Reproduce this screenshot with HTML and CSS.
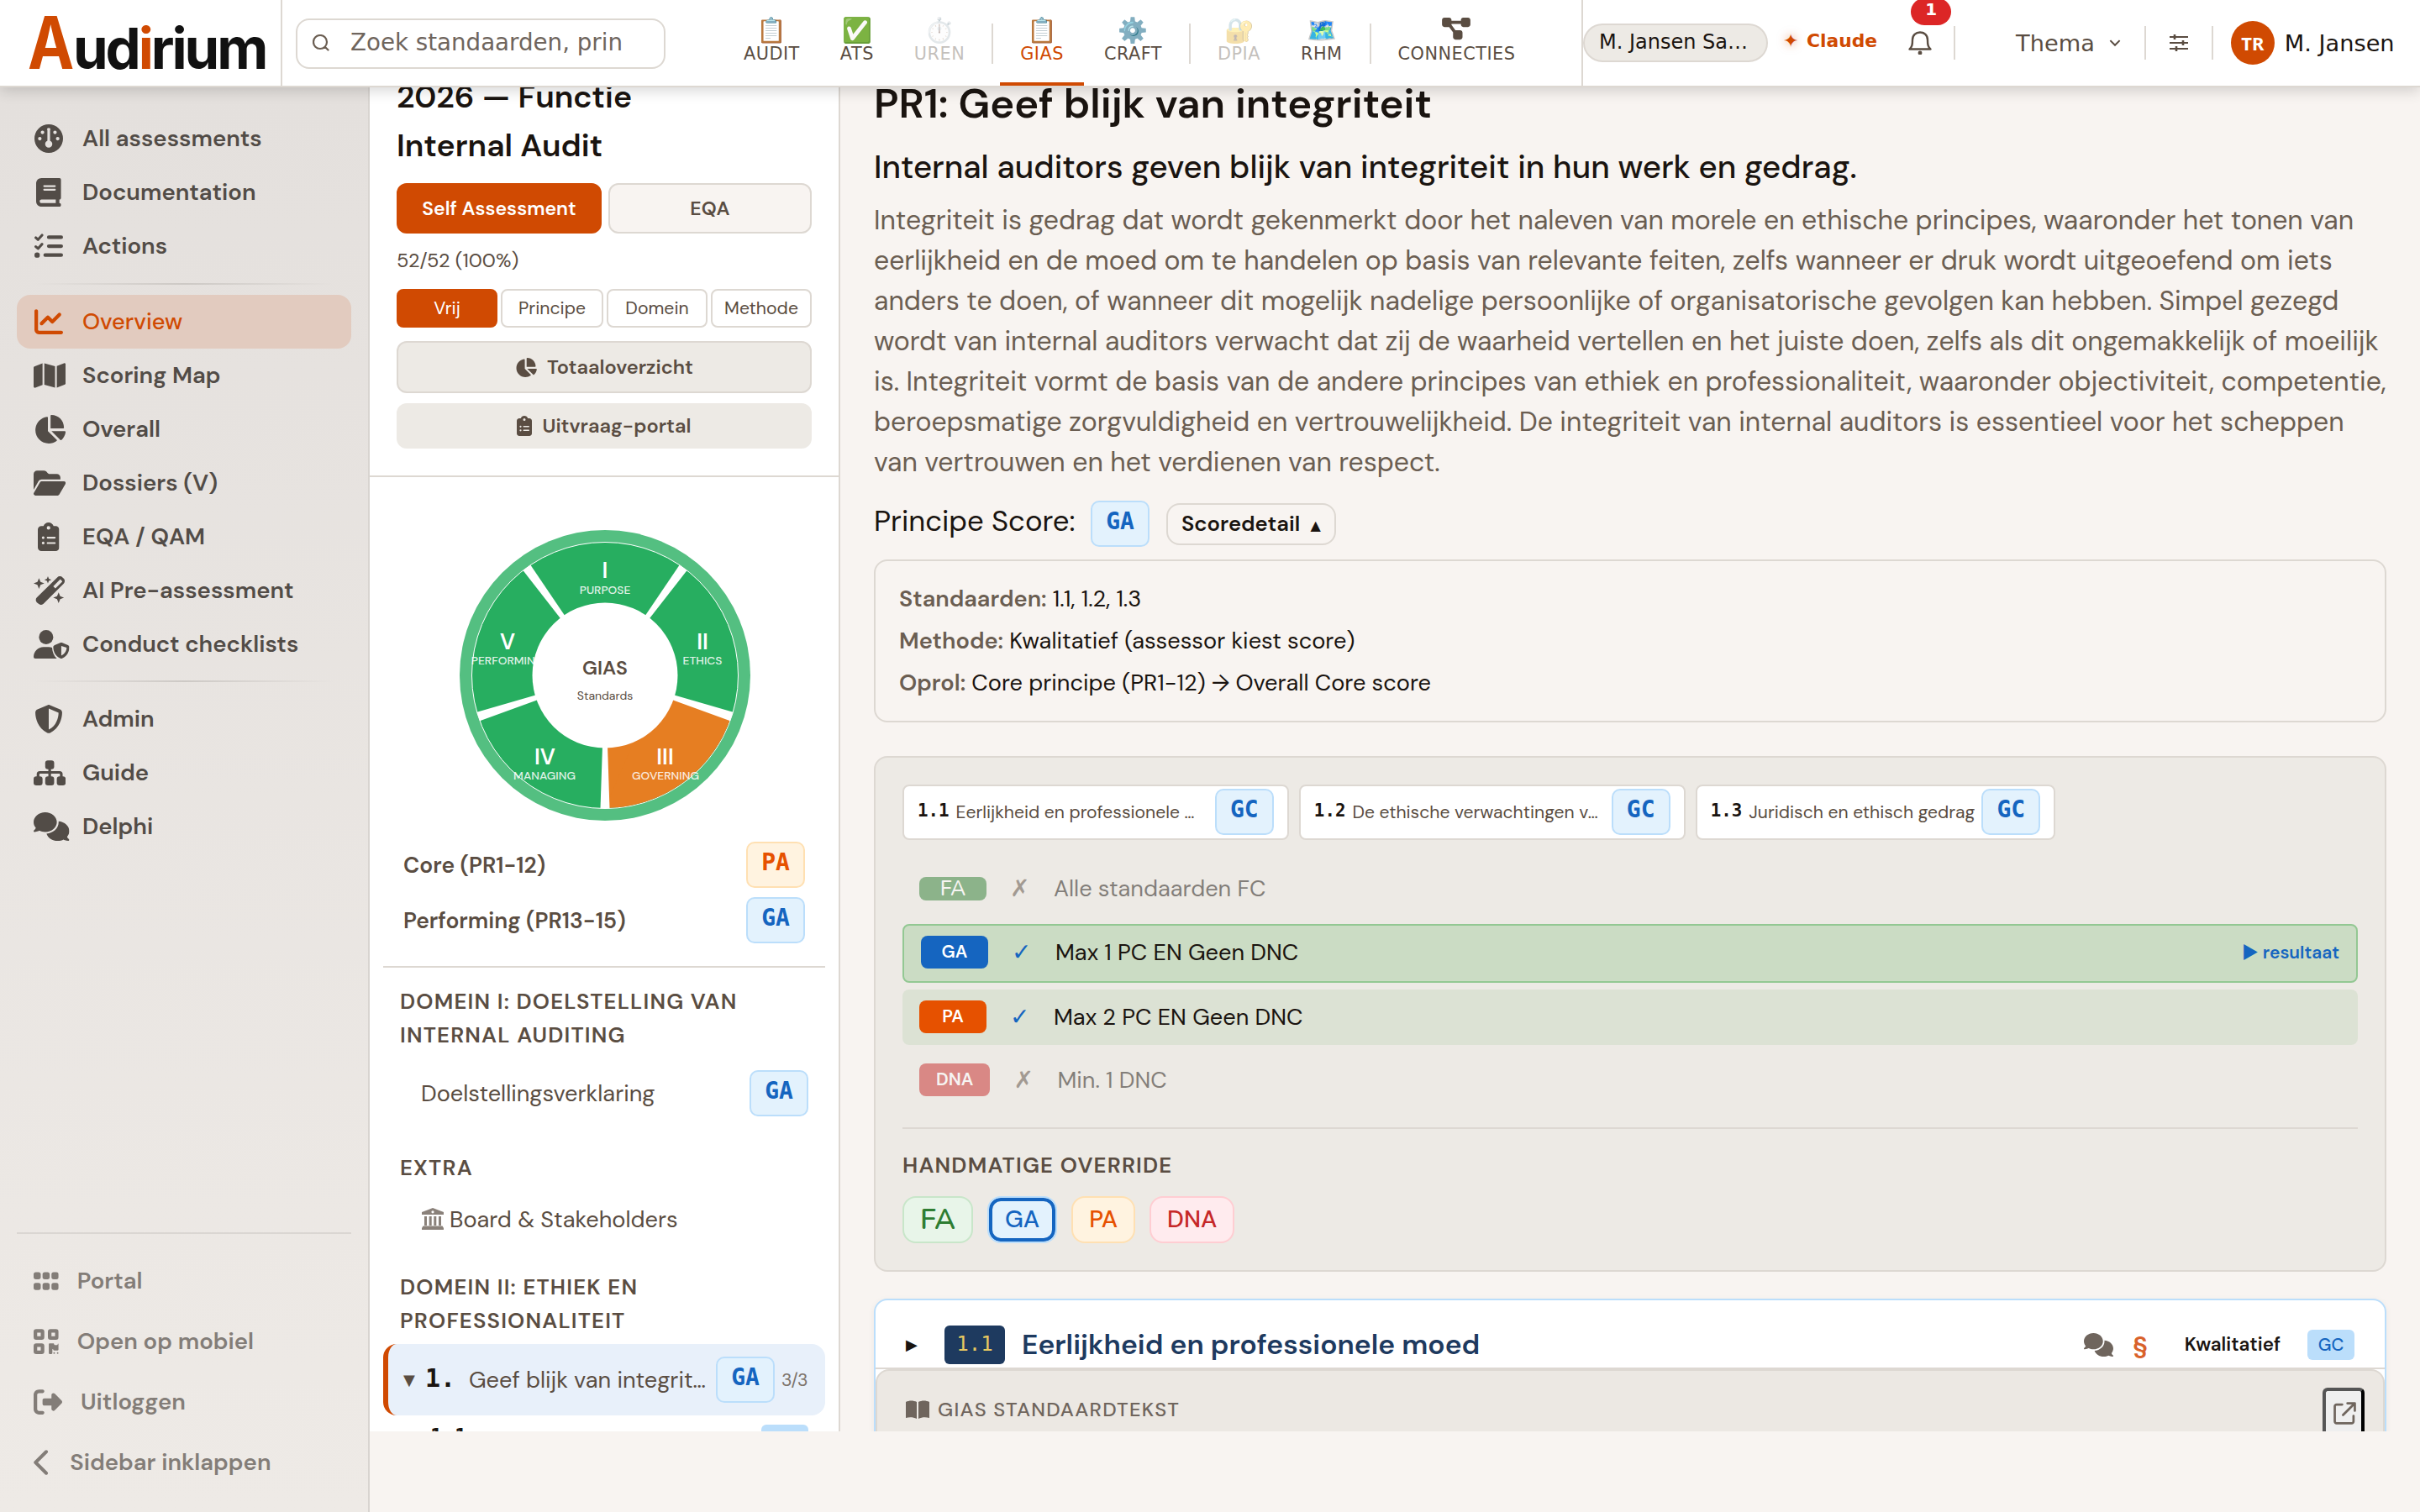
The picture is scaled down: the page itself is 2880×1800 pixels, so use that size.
FILE: index.html
```
<!DOCTYPE html>
<html lang="nl">
<head>
    <meta charset="UTF-8">
    <meta name="viewport" content="width=device-width, initial-scale=1.0">
    <title>GIAS - Audirium</title>
    <link rel="stylesheet" href="styles.css">
</head>
<body>
    <!-- shared icons -->
    <svg class="sprite">
        <symbol id="i-gauge" viewBox="0 0 512 512"><path fill-rule="evenodd" d="M0 256a256 256 0 1 1 512 0A256 256 0 1 1 0 256zM288 96c0-17.700-14.300-32-32-32s-32 14.300-32 32c0 0 8 0 8 0V295.200c-23.100 9.500-40 32.300-40 58.800c0 35.300 28.700 64 64 64s64-28.700 64-64c0-26.500-16.500-49.300-40-58.800V96zM144 176a32 32 0 1 0 0-64 32 32 0 1 0 0 64zM96 288a32 32 0 1 0 0-64 32 32 0 1 0 0 64zM400 144a32 32 0 1 0 -64 0 32 32 0 1 0 64 0zM416 288a32 32 0 1 0 0-64 32 32 0 1 0 0 64z"/></symbol>
        <symbol id="i-book" viewBox="0 0 448 512"><path d="M96 0C43 0 0 43 0 96V416c0 53 43 96 96 96H384h32c17.7 0 32-14.3 32-32s-14.3-32-32-32V384c17.7 0 32-14.3 32-32V32c0-17.7-14.3-32-32-32H384 96zm0 384H352v64H96c-17.7 0-32-14.3-32-32s14.3-32 32-32zm32-240c0-8.8 7.2-16 16-16H336c8.8 0 16 7.2 16 16s-7.2 16-16 16H144c-8.8 0-16-7.2-16-16zm16 48H336c8.8 0 16 7.2 16 16s-7.2 16-16 16H144c-8.8 0-16-7.2-16-16s7.2-16 16-16z"/></symbol>
        <symbol id="i-list" viewBox="0 0 512 512"><g fill="none" stroke="currentColor" stroke-linecap="round" stroke-linejoin="round"><path stroke-width="46" d="M24 104l40 36 72-80M24 264l40 36 72-80"/><path stroke-width="64" d="M256 96H480M256 256H480M192 416H480"/></g><circle cx="48" cy="416" r="48"/></symbol>
        <symbol id="i-line" viewBox="0 0 512 512"><path d="M64 64c0-17.7-14.3-32-32-32S0 46.3 0 64V400c0 44.2 35.8 80 80 80H480c17.7 0 32-14.3 32-32s-14.3-32-32-32H80c-8.8 0-16-7.2-16-16V64zm406.6 86.600c12.5-12.5 12.5-32.8 0-45.3s-32.8-12.5-45.3 0L320 210.7l-57.4-57.4c-12.5-12.5-32.8-12.5-45.3 0l-112 112c-12.5 12.5-12.5 32.8 0 45.3s32.8 12.5 45.3 0L240 221.3l57.4 57.4c12.5 12.5 32.8 12.5 45.3 0l128-128z"/></symbol>
        <symbol id="i-map" viewBox="0 0 576 512"><path d="M384 476.1L192 421.2V35.9L384 90.8V476.1zm32-1.2V88.4L543.1 37.5c15.8-6.3 32.9 5.3 32.9 22.3V394.6c0 9.8-6 18.6-15.1 22.3L416 474.8zM15.1 95.1L160 37.2V423.6L32.9 474.5C17.1 480.8 0 469.2 0 452.2V117.4c0-9.8 6-18.6 15.1-22.3z"/></symbol>
        <symbol id="i-pie" viewBox="0 0 576 512"><path d="M304 240V16.6c0-9 7-16.6 16-16.6C443.7 0 544 100.3 544 224c0 9-7.6 16-16.6 16H304zM32 272C32 150.7 122.1 50.3 239 34.3c9.2-1.3 17 6.1 17 15.4V288L412.5 444.5c6.7 6.7 6.2 17.7-1.5 23.1C371.8 495.6 323.8 512 272 512C139.5 512 32 404.6 32 272zm526.4 16c9.3 0 16.6 7.8 15.4 17c-7.7 55.9-34.6 105.6-73.9 142.3c-6 5.6-15.4 5.2-21.2-.7L320 288H558.4z"/></symbol>
        <symbol id="i-folder" viewBox="0 0 576 512"><path d="M88.7 223.8L0 375.8V96C0 60.7 28.7 32 64 32H181.5c17 0 33.3 6.7 45.3 18.7l26.5 26.5c12 12 28.3 18.7 45.3 18.7H416c35.3 0 64 28.7 64 64v32H144c-22.8 0-43.8 12.1-55.3 31.800zm27.600 16.1C122.1 230 132.6 224 144 224H544c11.5 0 22 6.1 27.7 16.1s5.7 22.2-.1 32.1l-112 192C453.9 474 443.4 480 432 480H32c-11.5 0-22-6.1-27.7-16.1s-5.7-22.2 .1-32.1l112-192z"/></symbol>
        <symbol id="i-clip" viewBox="0 0 384 512"><path d="M192 0c-41.8 0-77.4 26.7-90.5 64H64C28.7 64 0 92.7 0 128V448c0 35.3 28.7 64 64 64H320c35.3 0 64-28.7 64-64V128c0-35.3-28.7-64-64-64H282.5C269.4 26.7 233.8 0 192 0zm0 64a32 32 0 1 1 0 64 32 32 0 1 1 0-64zM72 272a24 24 0 1 1 48 0 24 24 0 1 1 -48 0zm104-16H304c8.8 0 16 7.2 16 16s-7.2 16-16 16H176c-8.8 0-16-7.2-16-16s7.2-16 16-16zM72 368a24 24 0 1 1 48 0 24 24 0 1 1 -48 0zm88 0c0-8.8 7.2-16 16-16H304c8.8 0 16 7.2 16 16s-7.2 16-16 16H176c-8.8 0-16-7.2-16-16z"/></symbol>
        <symbol id="i-wand" viewBox="0 0 576 512"><path d="M96 32l28 68 68 28-68 28-28 68-28-68L0 128l68-28zM256 0l18 46 46 18-46 18-18 46-18-46-46-18 46-18zM448 288l28 68 68 28-68 28-28 68-28-68-68-28 68-28z"/><path fill-rule="evenodd" d="M427 18a62 62 0 0 1 88 0l25 25a62 62 0 0 1 0 88L177 494a62 62 0 0 1-88 0l-31-25a62 62 0 0 1 0-88zM471 62L352 181l38 38 119-119c5-5 5-9 0-14l-24-24c-5-5-9-5-14 0z"/></symbol>
        <symbol id="i-usershield" viewBox="0 0 640 512"><circle cx="224" cy="128" r="128"/><path d="M178 304h92c22 0 43 4 62 11 2 78 34 150 84 197H30c-17 0-30-13-30-30 0-98 80-178 178-178z"/><path fill-rule="evenodd" d="M496 224c4 0 8 1 11 2l108 44c15 6 25 20 25 36 0 60-25 160-127 203-11 4-23 4-34 0-102-43-127-143-127-203 0-16 10-30 25-36l108-44c3-1 7-2 11-2zM496 286v172c72-34 94-98 96-142z"/></symbol>
        <symbol id="i-shield" viewBox="0 0 512 512"><path d="M256 0c4.6 0 9.2 1 13.4 2.9L457.7 82.8c22 9.3 38.4 31 38.3 57.2c-.5 99.2-41.3 280.7-213.6 363.2c-16.7 8-36.1 8-52.8 0C57.3 420.7 16.5 239.2 16 140c-.1-26.2 16.3-47.9 38.3-57.2L242.7 2.9C246.8 1 251.4 0 256 0zm0 66.8V444.8C394 378 431.1 230.1 432 141.4L256 66.8l0 0z"/></symbol>
        <symbol id="i-sitemap" viewBox="0 0 576 512"><rect x="208" y="32" width="160" height="160" rx="48"/><rect x="0" y="320" width="160" height="160" rx="48"/><rect x="208" y="320" width="160" height="160" rx="48"/><rect x="416" y="320" width="160" height="160" rx="48"/><path fill="none" stroke="currentColor" stroke-width="48" d="M288 180v150M80 330v-50c0-18 14-32 32-32h352c18 0 32 14 32 32v50"/></symbol>
        <symbol id="i-comments" viewBox="0 0 640 512"><path d="M208 352c114.9 0 208-78.8 208-176S322.9 0 208 0S0 78.8 0 176c0 38.6 14.7 74.3 39.6 103.4c-3.5 9.4-8.7 17.7-14.2 24.7c-4.8 6.2-9.7 11-13.3 14.3c-1.8 1.6-3.3 2.9-4.3 3.7c-.5 .4-.9 .7-1.1 .8l-.2 .2C1 327.2-1.4 334.4 .8 340.9S9.1 352 16 352c21.8 0 43.8-5.6 62.1-12.5c9.2-3.5 17.8-7.4 25.2-11.4C134.1 343.3 169.8 352 208 352zM448 176c0 112.3-99.1 196.9-216.5 207C255.8 457.4 336.4 512 432 512c38.2 0 73.9-8.7 104.7-23.9c7.5 4 16 7.9 25.2 11.4c18.3 6.9 40.3 12.5 62.1 12.5c6.9 0 13.1-4.5 15.2-11.1c2.1-6.6-.2-13.8-5.8-17.9l-.2-.2c-.2-.2-.6-.4-1.1-.8c-1-.8-2.5-2-4.3-3.7c-3.6-3.3-8.5-8.1-13.3-14.3c-5.5-7-10.7-15.4-14.2-24.7c24.9-29 39.6-64.7 39.6-103.4c0-92.8-84.9-168.9-192.6-175.5c.4 5.1 .6 10.3 .6 15.500z"/></symbol>
        <symbol id="i-grip" viewBox="0 0 448 512"><path d="M40 96h48a40 40 0 0 1 40 40v48a40 40 0 0 1-40 40H40a40 40 0 0 1-40-40v-48a40 40 0 0 1 40-40zM200 96h48a40 40 0 0 1 40 40v48a40 40 0 0 1-40 40h-48a40 40 0 0 1-40-40v-48a40 40 0 0 1 40-40zM360 96h48a40 40 0 0 1 40 40v48a40 40 0 0 1-40 40h-48a40 40 0 0 1-40-40v-48a40 40 0 0 1 40-40zM40 288h48a40 40 0 0 1 40 40v48a40 40 0 0 1-40 40H40a40 40 0 0 1-40-40v-48a40 40 0 0 1 40-40zM200 288h48a40 40 0 0 1 40 40v48a40 40 0 0 1-40 40h-48a40 40 0 0 1-40-40v-48a40 40 0 0 1 40-40zM360 288h48a40 40 0 0 1 40 40v48a40 40 0 0 1-40 40h-48a40 40 0 0 1-40-40v-48a40 40 0 0 1 40-40z"/></symbol>
        <symbol id="i-qr" viewBox="0 0 448 512"><g fill="none" stroke="currentColor" stroke-width="64"><rect x="32" y="64" width="128" height="128" rx="16"/><rect x="288" y="64" width="128" height="128" rx="16"/><rect x="32" y="320" width="128" height="128" rx="16"/></g><path d="M272 288h80c9 0 16 7 16 16s7 16 16 16h32c9 0 16-7 16-16s16-16 16 0v96c0 9-7 16-16 16h-64c-9 0-16-7-16-16s-16-16-16 0v64c0 9-7 16-16 16h-32c-9 0-16-7-16-16V304c0-9 7-16 16-16z"/><circle cx="368" cy="464" r="15"/><circle cx="432" cy="464" r="15"/></symbol>
        <symbol id="i-logout" viewBox="0 0 512 512"><path d="M377.9 105.9L500.7 228.7c7.2 7.2 11.3 17.1 11.3 27.3s-4.1 20.1-11.3 27.3L377.9 406.1c-6.4 6.4-15 9.9-24 9.9c-18.7 0-33.9-15.2-33.9-33.9l0-62.1-128 0c-17.7 0-32-14.3-32-32l0-64c0-17.7 14.3-32 32-32l128 0 0-62.1c0-18.7 15.2-33.9 33.9-33.9c9 0 17.6 3.6 24 9.9zM160 96L96 96c-17.7 0-32 14.3-32 32l0 256c0 17.7 14.3 32 32 32l64 0c17.7 0 32 14.3 32 32s-14.3 32-32 32l-64 0c-53 0-96-43-96-96L0 128C0 75 43 32 96 32l64 0c17.7 0 32 14.3 32 32s-14.3 32-32 32z"/></symbol>
        <symbol id="i-left" viewBox="0 0 320 512"><path fill="none" stroke="currentColor" stroke-width="60" stroke-linecap="round" stroke-linejoin="round" d="M226 64L34 256l192 192"/></symbol>
        <symbol id="i-nodes" viewBox="0 0 576 512"><path d="M0 80C0 53.5 21.5 32 48 32h96c26.5 0 48 21.5 48 48V96H384V80c0-26.5 21.5-48 48-48h96c26.5 0 48 21.5 48 48v96c0 26.5-21.5 48-48 48H432c-26.5 0-48-21.5-48-48V160H192v16c0 1.7-.1 3.4-.3 5L272 288h96c26.5 0 48 21.5 48 48v96c0 26.5-21.5 48-48 48H272c-26.5 0-48-21.5-48-48V336c0-1.7 .1-3.4 .3-5L144 224H48c-26.500 0-48-21.5-48-48V80z"/></symbol>
    </svg>

    <header class="topbar">
        <div class="logo"><span class="logo-a">A</span>ud<span class="logo-i">i</span>rium</div>
        <div class="search-wrap">
            <div class="search">
                <svg class="search-icon" viewBox="0 0 20 20"><path fill="none" stroke="currentColor" stroke-width="2.2" stroke-linecap="round" d="M14.700 14.700L18.500 18.500M17 9A8 8 0 1 1 1 9a8 8 0 0 1 16 0z"/></svg>
                <span class="search-text">Zoek standaarden, princ</span>
            </div>
        </div>
        <nav class="modules">
            <a class="module"><span class="emoji">📋</span>AUDIT</a>
            <a class="module"><span class="emoji">✅</span>ATS</a>
            <a class="module disabled"><span class="emoji">⏱️</span>UREN</a>
            <i class="vsep"></i>
            <a class="module active"><span class="emoji">📋</span>GIAS</a>
            <a class="module"><span class="emoji">⚙️</span>CRAFT</a>
            <i class="vsep"></i>
            <a class="module disabled"><span class="emoji">🔐</span>DPIA</a>
            <a class="module"><span class="emoji">🗺️</span>RHM</a>
            <i class="vsep"></i>
            <a class="module"><span class="emoji"><svg class="nodes"><use href="#i-nodes"/></svg></span>CONNECTIES</a>
        </nav>
        <div class="tools">
            <span class="pill">M. Jansen Sa…</span>
            <span class="claude"><span class="spark">✦</span>Claude</span>
            <span class="bell">
                <svg viewBox="0 0 30 28"><path fill="none" stroke="currentColor" stroke-width="2.400" stroke-linejoin="round" d="M2.500 21.500c3-3 3.500-5 3.500-11C6 5 10 1.500 15 1.500S24 5 24 10.500c0 6 .5 8 3.500 11z"/><circle cx="15" cy="26" r="2.400" fill="currentColor"/></svg>
                <b class="count">1</b>
            </span>
            <i class="tsep"></i>
            <span class="thema">Thema <svg viewBox="0 0 12 8"><path fill="none" stroke="currentColor" stroke-width="1.800" d="M1 1l5 5 5-5"/></svg></span>
            <i class="tsep"></i>
            <svg class="sliders" viewBox="0 0 22 20"><path stroke="currentColor" stroke-width="2.200" d="M0 3h22M0 10h22M0 17h22"/><path stroke="currentColor" stroke-width="2.600" d="M6 0v6M16 7v6M8 14v6"/></svg>
            <i class="tsep"></i>
            <span class="avatar">TR</span>
            <span class="user">M. Jansen</span>
        </div>
    </header>

    <div class="page">
        <aside class="sidebar">
            <a class="nav-item"><span class="ico"><svg class="w512"><use href="#i-gauge"/></svg></span>All assessments</a>
            <a class="nav-item"><span class="ico"><svg class="w448"><use href="#i-book"/></svg></span>Documentation</a>
            <a class="nav-item"><span class="ico"><svg class="w512"><use href="#i-list"/></svg></span>Actions</a>
            <hr class="fade">
            <a class="nav-item active"><span class="ico"><svg class="w512"><use href="#i-line"/></svg></span>Overview</a>
            <a class="nav-item"><span class="ico"><svg class="w576"><use href="#i-map"/></svg></span>Scoring Map</a>
            <a class="nav-item"><span class="ico"><svg class="w576"><use href="#i-pie"/></svg></span>Overall</a>
            <a class="nav-item"><span class="ico"><svg class="w576"><use href="#i-folder"/></svg></span>Dossiers (V)</a>
            <a class="nav-item"><span class="ico"><svg class="w384"><use href="#i-clip"/></svg></span>EQA / QAM</a>
            <a class="nav-item"><span class="ico"><svg class="w576"><use href="#i-wand"/></svg></span>AI Pre-assessment</a>
            <a class="nav-item"><span class="ico"><svg class="w640"><use href="#i-usershield"/></svg></span>Conduct checklists</a>
            <hr class="fade">
            <a class="nav-item"><span class="ico"><svg class="w512"><use href="#i-shield"/></svg></span>Admin</a>
            <a class="nav-item"><span class="ico"><svg class="w576"><use href="#i-sitemap"/></svg></span>Guide</a>
            <a class="nav-item"><span class="ico"><svg class="w640"><use href="#i-comments"/></svg></span>Delphi</a>
            <div class="side-foot">
                <a class="foot-item"><svg class="w448"><use href="#i-grip"/></svg>Portal</a>
                <a class="foot-item"><svg class="w448"><use href="#i-qr"/></svg>Open op mobiel</a>
                <a class="foot-item"><svg class="w512"><use href="#i-logout"/></svg>Uitloggen</a>
                <a class="foot-item"><svg class="w320"><use href="#i-left"/></svg>Sidebar inklappen</a>
            </div>
        </aside>

        <section class="tree">
            <div class="tree-head">
                <h2 class="tree-title">2026 — Functie<br>Internal Audit</h2>
                <div class="tabs"><a class="tab on">Self Assessment</a><a class="tab">EQA</a></div>
                <p class="progress">52/52 (100%)</p>
                <div class="filters"><a class="filter on">Vrij</a><a class="filter">Principe</a><a class="filter">Domein</a><a class="filter">Methode</a></div>
                <a class="wide outlined"><svg class="pie"><use href="#i-pie"/></svg>Totaaloverzicht</a>
                <a class="wide"><svg class="clip"><use href="#i-clip"/></svg>Uitvraag-portal</a>
            </div>
            <div class="tree-body">
                <svg class="wheel" viewBox="-180 -180 360 360">
                    <circle r="173" fill="#54bf81"/>
                    <circle r="158.500" fill="#27ae60" stroke="#fff" stroke-width="1"/>
                    <path d="M0 0L0 158L150.300 48.800z" fill="#e67e22"/>
                    <path d="M0 158A158 158 0 0 0 150.300 48.800L60 20z" fill="#e67e22"/>
                    <g fill="#fff">
                        <path id="gap" d="M-3 -84L-5.500 -158.500H5.500L3 -84z" transform="rotate(36)"/>
                        <use href="#gap" transform="rotate(72)"/>
                        <use href="#gap" transform="rotate(144)"/>
                        <use href="#gap" transform="rotate(216)"/>
                        <use href="#gap" transform="rotate(288)"/>
                        <circle r="86.500"/>
                    </g>
                    <g class="num"><text x="0" y="-116.500">I</text><text x="116" y="-31">II</text><text x="71.500" y="105.600">III</text><text x="-71.500" y="105.600">IV</text><text x="-116" y="-31">V</text></g>
                    <g class="cap"><text x="0" y="-97">PURPOSE</text><text x="116" y="-13">ETHICS</text><text x="72" y="124">GOVERNING</text><text x="-72" y="124">MANAGING</text><text x="-116" y="-13">PERFORMING</text></g>
                    <text class="mid" x="0" y="-1">GIAS</text>
                    <text class="mid-sub" x="0" y="29">Standards</text>
                </svg>
                <div class="total"><span>Core (PR1-12)</span><b class="score pa">PA</b></div>
                <div class="total"><span>Performing (PR13-15)</span><b class="score ga">GA</b></div>
                <hr class="line">
                <h3 class="domain first">DOMEIN I: DOELSTELLING VAN INTERNAL AUDITING</h3>
                <div class="leaf"><span>Doelstellingsverklaring</span><b class="score ga">GA</b></div>
                <h3 class="domain extra">EXTRA</h3>
                <div class="leaf board"><span><svg class="bank" viewBox="0 0 26 26"><path fill-rule="evenodd" d="M13 0L26 5V8H0V5zM13 3.200a1.600 1.600 0 1 0 0 3.200 1.600 1.600 0 0 0 0-3.200zM3 10h3v11H3zM8.700 10h3v11h-3zM14.300 10h3v11h-3zM20 10h3v11h-3zM1.500 21.500h23L26 24v2H0v-2z"/></svg>Board &amp; Stakeholders</span></div>
                <h3 class="domain second">DOMEIN II: ETHIEK EN PROFESSIONALITEIT</h3>
                <div class="principle"><span class="caret">▼</span><b class="pnum">1.</b><span class="pname">Geef blijk van integrit…</span><b class="score ga">GA</b><span class="pcount">3/3</span></div>
                <div class="standard"><b>1.1</b><span class="mini"></span></div>
            </div>
        </section>

        <main class="content">
            <h1>PR1: Geef blijk van integriteit</h1>
            <p class="lead">Internal auditors geven blijk van integriteit in hun werk en gedrag.</p>
            <p class="intro">Integriteit is gedrag dat wordt gekenmerkt door het naleven van morele en ethische principes, waaronder het tonen van eerlijkheid en de moed om te handelen op basis van relevante feiten, zelfs wanneer er druk wordt uitgeoefend om iets anders te doen, of wanneer dit mogelijk nadelige persoonlijke of organisatorische gevolgen kan hebben. Simpel gezegd wordt van internal auditors verwacht dat zij de waarheid vertellen en het juiste doen, zelfs als dit ongemakkelijk of moeilijk is. Integriteit vormt de basis van de andere principes van ethiek en professionaliteit, waaronder objectiviteit, competentie, beroepsmatige zorgvuldigheid en vertrouwelijkheid. De integriteit van internal auditors is essentieel voor het scheppen van vertrouwen en het verdienen van respect.</p>
            <div class="score-row"><span class="score-label">Principe Score:</span><b class="score ga">GA</b><a class="detail-btn">Scoredetail <span class="up">▲</span></a></div>
            <div class="info">
                <p><b>Standaarden:</b> 1.1, 1.2, 1.3</p>
                <p><b>Methode:</b> Kwalitatief (assessor kiest score)</p>
                <p><b>Oprol:</b> Core principe (PR1-12) → Overall Core score</p>
            </div>

            <div class="panel">
                <div class="chips">
                    <div class="chip"><b>1.1</b><span>Eerlijkheid en professionele moed</span><b class="score ga">GC</b></div>
                    <div class="chip"><b>1.2</b><span>De ethische verwachtingen van de organisatie</span><b class="score ga">GC</b></div>
                    <div class="chip"><b>1.3</b><span>Juridisch en ethisch gedrag</span><b class="score ga">GC</b></div>
                </div>
                <div class="rule off"><b class="tag green">FA</b><i class="mark">✗</i><span>Alle standaarden FC</span></div>
                <div class="rule hit result"><b class="tag blue">GA</b><i class="mark">✓</i><span>Max 1 PC EN Geen DNC</span><em>▶ resultaat</em></div>
                <div class="rule hit"><b class="tag orange">PA</b><i class="mark">✓</i><span>Max 2 PC EN Geen DNC</span></div>
                <div class="rule off"><b class="tag red">DNA</b><i class="mark">✗</i><span>Min. 1 DNC</span></div>
                <div class="override">
                    <h4>HANDMATIGE OVERRIDE</h4>
                    <div class="choices"><a class="choice fa">FA</a><a class="choice ga picked">GA</a><a class="choice pa">PA</a><a class="choice dna">DNA</a></div>
                </div>
            </div>

            <article class="card">
                <div class="card-head">
                    <span class="play">▶</span><b class="code">1.1</b><h2>Eerlijkheid en professionele moed</h2>
                    <svg class="talk"><use href="#i-comments"/></svg><b class="para">§</b><span class="method">Kwalitatief</span><span class="gc">GC</span>
                </div>
                <div class="std">
                    <span class="std-title"><svg viewBox="0 0 28 22"><path d="M0 2C4 0 9 0 13 2v20C9 20 4 20 0 21zM28 2C24 0 19 0 15 2v20c4-2 9-2 13-1z"/></svg>GIAS STANDAARDTEKST</span>
                    <button class="open"><svg viewBox="0 0 26 26"><path fill="none" stroke="currentColor" stroke-width="2.600" stroke-linecap="round" stroke-linejoin="round" d="M10 3H3.500C2.500 3 1.500 4 1.500 5v17.500c0 1 1 2 2 2H21c1 0 2-1 2-2V16M16 1.500h8.500V10M24 2L11 15"/></svg></button>
                </div>
            </article>
        </main>
    </div>
</body>
</html>
```
FILE: styles.css
```
* { box-sizing: border-box; margin: 0; padding: 0; }
body { width: 2880px; height: 1800px; overflow: hidden; background: #f8f4f1; color: #1a1410; font-family: "DM Sans", Inter, sans-serif; font-size: 27.2px; }
svg { fill: currentColor; flex: none; display: block; }
hr { border: none; }
.sprite { display: none; }

/* top bar */
.topbar { position: relative; z-index: 5; display: flex; height: 104px; background: #fff; border-bottom: 2px solid #ddd8d2; box-shadow: 0 4px 16px rgba(0,0,0,0.16); font-family: "DejaVu Sans", sans-serif; color: #5a4d42; }
.logo { width: 336px; height: 102px; padding-left: 33px; border-right: 2px solid #ddd8d2; font: 700 67px/102px Inter, sans-serif; letter-spacing: -3.1px; color: #111; white-space: nowrap; padding-top: 7px; }
.logo-a { display: inline-block; width: 54px; font-size: 86px; line-height: 60px; letter-spacing: 0; color: #d04a02; transform: scaleX(0.86); transform-origin: left; }
.logo-i { color: #d04a02; }
.search-wrap { width: 525px; padding: 22px 0 0 16px; }
.search { display: flex; align-items: center; width: 440px; height: 60px; padding: 0 0 3px 18px; border: 2px solid #ddd8d2; border-radius: 16px; }
.search-icon { width: 20px; height: 20px; margin-right: 25px; color: #6b5e52; }
.search-text { width: 325px; overflow: hidden; white-space: nowrap; font-size: 27.7px; color: #6f655d; }
.modules { display: flex; width: 1021px; }
.module { display: flex; flex-direction: column; align-items: center; padding: 19px 24px 0; height: 102px; font-size: 20.8px; line-height: 22px; letter-spacing: 0.5px; white-space: nowrap; }
.module.active { color: #d04a02; border-bottom: 4px solid #d04a02; }
.module.disabled { opacity: 0.35; }
.emoji { height: 34px; font-size: 28.8px; line-height: 34px; letter-spacing: 0; }
.nodes { width: 34px; height: 30px; }
.vsep { width: 2px; height: 48px; margin: 28px 8px 0; background: #ddd8d2; }
.tools { display: flex; align-items: center; flex: 1; height: 102px; border-left: 2px solid #ddd8d2; }
.pill { width: 220px; height: 46px; padding-left: 17px; border: 2px solid #ddd8d2; border-radius: 23px; background: #edeae5; font-size: 24px; line-height: 41px; color: #1a1410; }
.claude { display: flex; align-items: center; margin: -5px 0 0 18px; font-size: 21.8px; font-weight: bold; color: #d04a02; }
.spark { width: 28px; font-size: 22px; text-shadow: 0 0 12px rgba(208,74,2,0.6); }
.bell { position: relative; width: 30px; margin: 0 25px 0 36px; }
.bell svg { width: 30px; height: 28px; }
.count { position: absolute; left: 4px; top: -39px; width: 48px; height: 32px; border-radius: 16px; background: #dc2626; color: #fff; font-size: 20px; line-height: 26px; text-align: center; }
.tsep { width: 2px; height: 40px; background: #ddd8d2; }
.thema { display: flex; align-items: center; margin: 0 28px 0 72px; }
.thema svg { width: 14px; height: 9px; margin-left: 17px; }
.sliders { width: 22px; height: 20px; margin: 0 28px; }
.avatar { width: 52px; height: 52px; margin: 0 12px 0 21px; border-radius: 50%; background: #d04a02; color: #fff; font: bold 22px/52px "Noto Sans", sans-serif; text-align: center; }
.user { color: #1a1410; white-space: nowrap; }

.page { display: flex; height: 1696px; }

/* sidebar */
.sidebar { display: flex; flex-direction: column; width: 440px; height: 1696px; padding: 29px 20px 23px; border-right: 2px solid #d8d4d0; background: linear-gradient(#e4e0dd, #eeeae6); color: #524c47; font-size: 27.5px; }
.nav-item { display: flex; align-items: center; height: 64px; padding-left: 20px; border-radius: 16px; font-weight: 600; flex: none; }
.nav-item.active { background: #e2cbbf; color: #d04a02; font-weight: 500; font-size: 27.2px; }
.ico { display: flex; justify-content: safe center; width: 36px; margin-right: 22px; }
.w320 { width: 21.250px; height: 34px; }
.w384 { width: 25.500px; height: 34px; }
.w448 { width: 29.750px; height: 34px; }
.w512 { width: 34px; height: 34px; }
.w576 { width: 38.250px; height: 34px; }
.w640 { width: 42.500px; height: 34px; }
.fade { flex: none; height: 2px; margin: 11.5px 20px 12px; background: linear-gradient(90deg, transparent, #cdc9c5, transparent); }
.side-foot { margin-top: auto; border-top: 2px solid #dad6d2; padding-top: 20px; color: #837d78; }
.foot-item { display: flex; align-items: center; gap: 22px; height: 72px; padding-left: 20px; font-weight: 600; }

/* assessment tree */
.tree { width: 560px; height: 1600px; overflow: hidden; background: #fff; border-right: 2px solid #ddd8d2; color: #5a4d42; }
.tree-head { margin-top: -17px; padding: 0 32px 32px; border-bottom: 2px solid #ddd8d2; }
.tree-title { height: 115px; margin-bottom: 16px; font-size: 37.4px; line-height: 57.6px; font-weight: 600; color: #1a1410; }
.tabs { display: flex; gap: 8px; }
.tab { width: 242px; height: 60px; border: 2px solid #ddd8d2; border-radius: 12px; background: #f8f4f1; font-size: 23px; line-height: 56px; font-weight: 600; text-align: center; }
.tab.on { width: 244px; background: #d04a02; border-color: #d04a02; color: #fff; }
.progress { margin: 14px 0 16px; font-size: 23.5px; line-height: 36px; }
.filters { display: grid; grid-template-columns: 120px 122px 120px 120px; gap: 4px; }
.filter { height: 46px; border: 2px solid #ddd8d2; border-radius: 8px; font-size: 21.2px; line-height: 42px; text-align: center; }
.filter.on { background: #d04a02; border-color: #d04a02; color: #fff; }
.wide { display: flex; align-items: center; justify-content: center; gap: 12px; height: 54px; margin-top: 12px; border-radius: 12px; background: #edeae5; font-size: 23.6px; font-weight: 600; }
.wide.outlined { height: 62px; margin-top: 16px; border: 2px solid #ddd8d2; }
.pie { width: 26px; height: 23px; }
.clip { width: 18px; height: 24px; }
.tree-body { padding: 56px 16px 0; }
.wheel { width: 360px; height: 360px; margin: 0 auto 18px 84px; text-anchor: middle; }
.num { font-size: 26px; font-weight: 600; fill: #fff; }
.cap { font-size: 13.8px; font-weight: 500; fill: #fff; opacity: 0.85; }
.mid { font-size: 23.2px; font-weight: 600; }
.mid-sub { font-size: 14px; }
.total { display: flex; align-items: center; justify-content: space-between; height: 55px; margin-bottom: 11px; padding: 0 24px; font-size: 26.4px; font-weight: 600; }
.score { display: inline-block; flex: none; width: 70px; height: 55px; padding-bottom: 6px; border: 2px solid; border-radius: 10px; font: bold 28px/46px "DejaVu Sans Mono", monospace; text-align: center; }
.ga { background: #e3f2fd; border-color: #bbdefb; color: #1565c0; }
.pa { background: #fff3e0; border-color: #ffe0b2; color: #e65100; }
.line { height: 2px; margin-top: 27px; background: #ddd8d2; }
.domain { padding: 0 20px; font-size: 25.9px; line-height: 40px; font-weight: 600; letter-spacing: 1.16px; }
.domain.first { margin: 20px 0 13px; }
.domain.extra { margin: 33px 0 17px; }
.domain.second { margin: 37px 0 8px; padding-right: 70px; }
.leaf { display: flex; align-items: center; justify-content: space-between; height: 72px; padding: 0 20px 0 45px; }
.leaf.board { height: 48px; }
.leaf.board span { display: flex; align-items: center; }
.bank { width: 26px; height: 26px; margin: 0 7px 0 1px; opacity: 0.7; }
.principle { display: flex; align-items: center; height: 85px; padding-left: 18px; border-left: 6px solid #d04a02; border-radius: 16px; background: #e8f0fa; }
.caret { width: 26px; font: 18px "DejaVu Sans", sans-serif; }
.pnum { width: 52px; font: bold 30px "DejaVu Sans Mono", monospace; color: #1a1410; padding-bottom: 4px; }
.pname { width: 294px; white-space: nowrap; }
.pcount { margin-left: 8px; font-size: 21.2px; color: #7d746c; }
.standard { display: flex; justify-content: space-between; align-items: flex-start; height: 60px; padding: 11px 20px 0 56px; font: bold 24px/40px "DejaVu Sans Mono", monospace; color: #1a1410; }
.standard b { line-height: 29px; }
.mini { width: 56px; height: 36px; border-radius: 6px; background: #bbdefb; }

/* content */
.content { flex: 1; height: 1600px; overflow: hidden; padding: 0 40px; }
h1 { margin: -10px 0 19px; font-size: 48.9px; line-height: 58px; font-weight: 600; }
.lead { font-size: 38.35px; line-height: 57.6px; font-weight: 500; margin-bottom: 9px; }
.intro { width: 1802px; font-size: 32px; line-height: 48px; letter-spacing: -0.01px; color: #6b5e52; height: 336px; margin-bottom: 22px; }
.score-row { display: flex; align-items: center; height: 56px; margin-bottom: 14px; }
.score-label { width: 258px; font-size: 34.7px; padding-bottom: 6px; }
.detail-btn { margin-left: 20px; height: 50px; width: 202px; padding-left: 16px; border: 2px solid #ddd8d2; border-radius: 16px; font-size: 25.6px; line-height: 46px; font-weight: 600; white-space: nowrap; }
.up { font: 16px "DejaVu Sans", sans-serif; margin-left: 6px; vertical-align: 1px; }
.info { height: 194px; padding: 20px 28px; border: 2px solid #ddd8d2; border-radius: 16px; line-height: 50px; }
.info b { font-weight: 600; color: #6b5e52; }
.panel { margin-top: 40px; height: 614px; padding: 32px; border: 2px solid #ddd8d2; border-radius: 16px; background: #edeae5; }
.chips { display: flex; gap: 12px; margin-bottom: 24px; }
.chip { display: flex; align-items: center; gap: 8px; height: 66px; padding: 0 16px; border: 2px solid #ddd8d2; border-radius: 8px; background: #fff; font-size: 21.1px; }
.chip b:first-child { font: bold 20.8px "DejaVu Sans Mono", monospace; padding-bottom: 4px; }
.chip span { max-width: 300.3px; overflow: hidden; text-overflow: ellipsis; white-space: nowrap; color: #5a4d42; }
.rule { display: flex; align-items: center; gap: 28px; height: 68px; padding: 0 20px; border-radius: 8px; }
.rule.off { opacity: 0.5; }
.rule.hit { height: 66px; margin-bottom: 8px; background: #dce2d4; }
.rule.result { height: 70px; margin-top: 8px; padding-bottom: 2px; border: 2px solid #93c893; background: #cbdcc4; }
.tag { min-width: 80px; height: 39px; padding: 0 20px; border-radius: 8px; color: #fff; font-size: 21px; line-height: 39px; font-weight: 600; text-align: center; }
.red { background: #c62828; }
.blue { background: #1565c0; }
.orange { background: #e65100; }
.green { height: 28px; background: #2e7d32; font: 500 25px/29px Nunito, sans-serif; }
.mark { width: 24px; font: 28px "DejaVu Sans", sans-serif; color: #1565c0; }
.off .mark { color: #5a4d42; }
.rule em { margin-left: auto; font-style: normal; font-size: 21px; font-weight: 600; color: #1565c0; }
.override { margin-top: 22px; border-top: 2px solid #ddd8d2; padding-top: 23px; }
.override h4 { font-size: 25.9px; line-height: 40px; font-weight: 600; letter-spacing: 1.16px; color: #5a4d42; }
.choices { display: flex; gap: 17px; margin-top: 17px; }
.choice { height: 56px; padding: 0 19px; border-width: 2px; border-style: solid; border-radius: 16px; font-size: 28.6px; line-height: 52px; font-weight: 500; }
.choice.fa { background: #e8f5e9; border-color: #c8e6c9; color: #2e7d32; font: 600 34px/52px Nunito, sans-serif; }
.choice.picked { box-shadow: inset 0 0 0 4px #1565c0; }
.choice.dna { background: #ffebee; border-color: #ffcdd2; color: #c62828; }

/* standard card */
.card { margin-top: 32px; height: 400px; border: 2px solid #bbdefb; border-radius: 16px; background: #fff; box-shadow: 0 2px 8px rgba(0,0,0,0.05); }
.card-head { display: flex; align-items: center; height: 82px; padding: 26px 36px 0 35px; border-bottom: 2px solid #ddd8d2; }
.play { width: 47px; padding-left: 1px; font: 18px "DejaVu Sans", sans-serif; }
.code { width: 72px; height: 46px; margin-right: 20px; border-radius: 6px; background: #1e3a5f; color: #e8c860; font: 24px/44px "DejaVu Sans Mono", monospace; text-align: center; }
.card h2 { font-size: 33.6px; font-weight: 600; color: #1e3a5f; }
.talk { width: 35px; height: 28px; margin-left: auto; color: #6f655d; }
.para { margin: 0 44px 0 23px; font-size: 29px; font-weight: 600; color: #d9622b; }
.method { margin-right: 32px; font-size: 22.4px; font-weight: 600; }
.gc { width: 56px; height: 36px; border-radius: 6px; background: #bbdefb; color: #1565c0; font-size: 20.6px; line-height: 36px; font-weight: 500; text-align: center; }
.std { display: flex; justify-content: space-between; height: 300px; padding: 20px 22px 0 34px; border: 2px solid #ddd8d2; border-radius: 16px; background: #ece8e3; color: #6f655d; }
.std-title { display: flex; align-items: center; height: 52px; font-size: 23.8px; font-weight: 500; letter-spacing: 1.2px; }
.std-title svg { width: 28px; height: 22px; margin-right: 10px; }
.open { width: 50px; height: 62px; padding: 0 0 0 9px; border: 4px solid; border-color: #555 #000 #000 #555; border-radius: 6px; background: #efefef; color: #6f655d; }
.open svg { width: 27px; height: 27px; }
```
